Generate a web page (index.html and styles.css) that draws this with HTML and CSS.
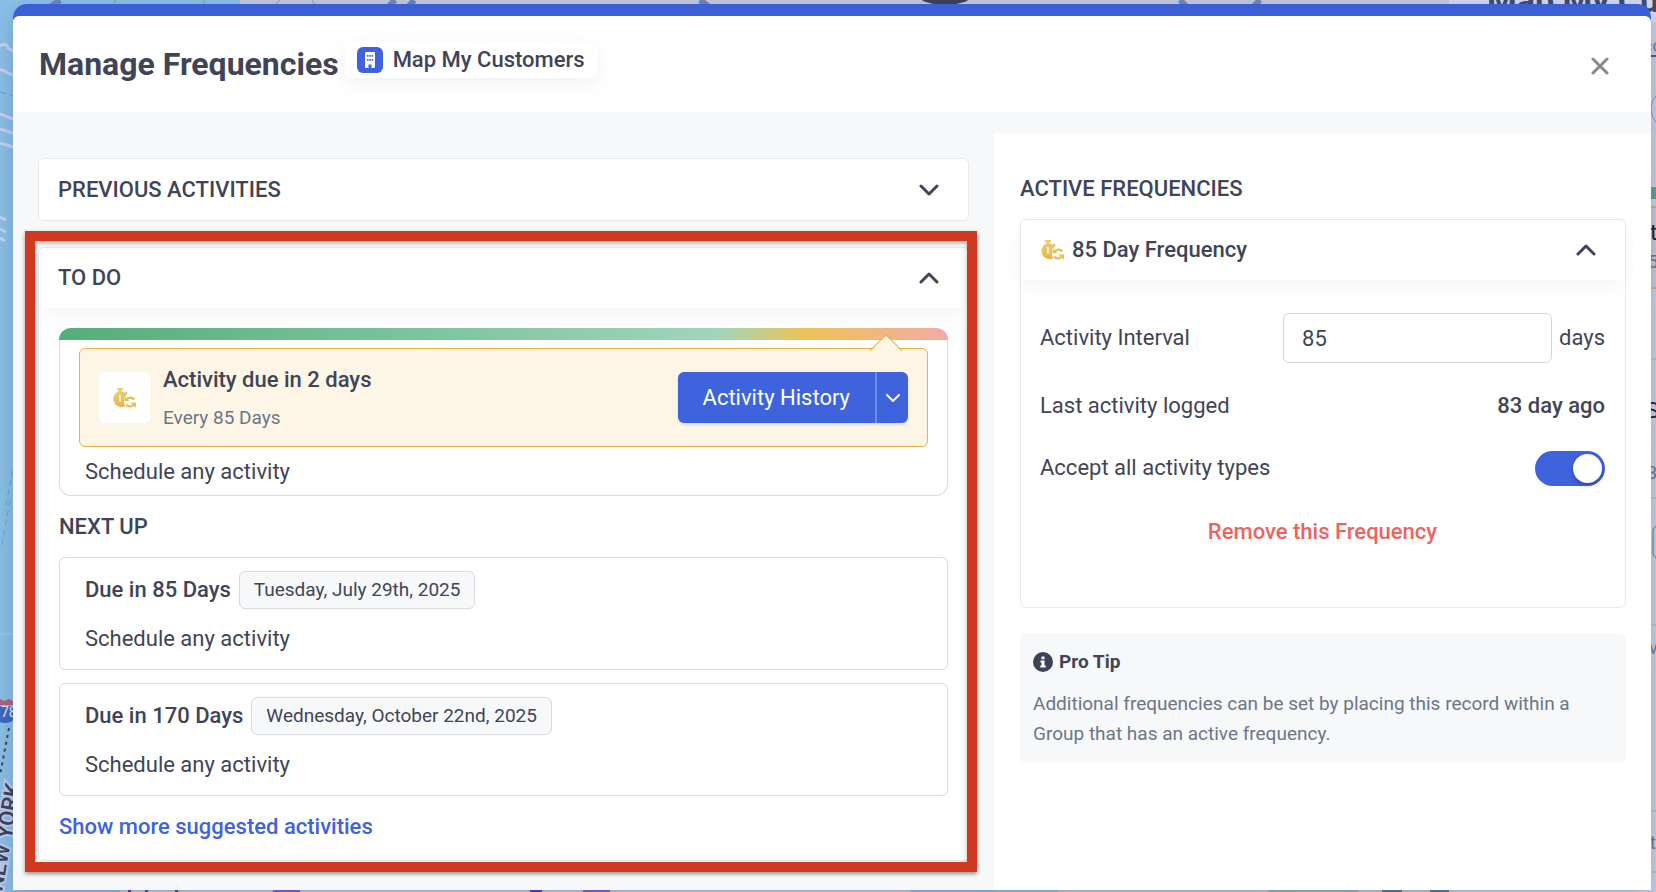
FILE: index.html
```html
<!DOCTYPE html>
<html lang="en">
<head>
    <meta charset="UTF-8">
    <meta name="viewport" content="width=device-width, initial-scale=1.0">
    <title>Manage Frequencies</title>
    <link rel="stylesheet" href="styles.css">
</head>
<body>
    <!-- Map and record panel behind the modal -->
    <svg class="backdrop" viewBox="0 0 1656 892" preserveAspectRatio="none" aria-hidden="true">
        <rect width="1656" height="892" fill="#8cc0e6"/>
        <path d="M240 0h1209v5H240zM120 885h790v7H120zM1058 885h391v7h-391z" fill="#c3c9df"/>
        <path d="M60 0l-8 6M395 0l-6 6M414 0l-5 6M700 0l8 6M1180 0l6 6M1260 0l-6 6" stroke="#6f86b9" stroke-width="6"/>
        <path d="M116 0l-3 5M205 0l-2 5M280 0l-5 5M312 0l3 5" stroke="#5fb7a5" stroke-width="1"/>
        <ellipse cx="945" cy="-4" rx="26" ry="9" fill="#3c4257"/>
        <path d="M0 46q6-4 8 2l5 3M0 69l13 6M0 114l13 5M0 129l13 4M0 143l13 4M0 217l6 3M0 229l6 3M0 238l5 3" stroke="#ccd2ee" stroke-width="3" fill="none"/>
        <path d="M0 92l13 4M13 470L5 510M10 500L2 545" stroke="#5aa9d8" stroke-width="1" fill="none" stroke-dasharray="6 4"/>
        <path d="M0 634h13" stroke="#a5cdec" stroke-width="1"/>
        <path d="M9 728L0 775" stroke="#3c4257" stroke-width="2" stroke-dasharray="3 4"/>
        <path d="M0 699l4 2 5-2 4 2v4H0z" fill="#b4617a"/>
        <path d="M-6 706h22q2 17-11 17T-6 706z" fill="#3f68c0"/>
        <text class="map-road" x="1" y="717">78</text>
        <text class="map-label" transform="translate(2 892) rotate(-80)">NEW YORK</text>
        <path d="M128 891h3M145 891h3M175 891h3M530 891h12" stroke="#5a35c8" stroke-width="3"/>
        <path d="M273 891h27M583 891h27" stroke="#8a5be0" stroke-width="4"/>
        <path d="M1268 891h90" stroke="#8fbdbb" stroke-width="3"/>
        <path d="M1382 891h20M1430 891h19" stroke="#5a77ab" stroke-width="3"/>
        <rect x="1449" width="207" height="892" fill="#c8cfe8"/>
        <rect x="1449" width="207" height="22" fill="#d3daf5"/>
        <text class="panel-title" x="1487" y="12">Map My Customers</text>
        <text class="panel-small" x="1643" y="52">co</text>
        <path d="M1640 56h16" stroke="#4c5a88" stroke-width="2"/>
        <circle cx="1671" cy="109" r="20" fill="none" stroke="#7d90dd"/>
        <rect x="1640" y="187" width="16" height="12" fill="#5ba294"/>
        <rect x="1640" y="207" width="16" height="81" fill="#c6c8d0"/>
        <path d="M1640 207h16M1640 288h16" stroke="#c39a44"/>
        <text class="panel-bold" x="1650" y="240">t</text>
        <text class="panel-small" x="1648" y="268">5</text>
        <path d="M1640 359h16M1640 498h16M1640 625h16M1640 811h16M1640 872h16" stroke="#a7afc9"/>
        <text class="panel-bold" x="1646" y="418">S</text>
        <text class="panel-small" x="1647" y="479">3</text>
        <rect x="1653" y="526" width="20" height="32" rx="5" fill="none" stroke="#3f8191"/>
        <text class="panel-small" x="1649" y="654">v</text>
        <text class="panel-small" x="1650" y="849">t</text>
    </svg>

    <!-- Shared icons -->
    <svg class="sprite" aria-hidden="true">
        <defs>
            <linearGradient id="gold" x1="0" y1="0" x2="0" y2="1">
                <stop offset="0" stop-color="#f0d070"/>
                <stop offset="1" stop-color="#e7b548"/>
            </linearGradient>
        </defs>
        <symbol id="icon-frequency" viewBox="0 0 24 20">
            <path fill="url(#gold)" d="M5 0h6v2H9.500v1.300c1.200.2 2.200.7 3 1.300L14.200 3.500l1.600 1.600-1.300 1.700C12.800 8 12 9.500 12 11.500V14l1 4.500A8 8 0 1 1 6.500 3.300V2H5z"/>
            <path d="M8 7v6.500" stroke="#fff" stroke-width="1.800"/>
            <path d="M14.500 12.200c1.300-3.200 5.500-3.600 7.800-.7M21.800 15.800c-1.300 3.200-5.500 3.600-7.800.7" fill="none" stroke="#eabd55" stroke-width="2.200"/>
            <path d="M12.500 8v5.200h5zM24 20v-5.500h-5.500z" fill="#eabd55"/>
        </symbol>
        <symbol id="icon-down" viewBox="0 0 20 12">
            <path d="M2 2l8 8 8-8" fill="none" stroke="currentColor" stroke-width="3" stroke-linecap="round" stroke-linejoin="round"/>
        </symbol>
        <symbol id="icon-up" viewBox="0 0 20 12">
            <path d="M2 10l8-8 8 8" fill="none" stroke="currentColor" stroke-width="3" stroke-linecap="round" stroke-linejoin="round"/>
        </symbol>
    </svg>

    <main class="modal">
        <header class="modal-header">
            <h1>Manage Frequencies</h1>
            <div class="record">
                <span class="record-icon">
                    <svg width="10" height="16" viewBox="0 0 10 16">
                        <path d="M1 0h8q1 0 1 1v14q0 1-1 1H6.500v-3.500h-3V16H1q-1 0-1-1V1q0-1 1-1z" fill="#fff"/>
                        <path d="M2 3h1.500v1.700H2zM4.300 3h1.500v1.700H4.300zM6.600 3h1.500v1.700H6.600zM2 7h1.500v1.700H2zM4.300 7h1.500v1.700H4.300zM6.600 7h1.500v1.700H6.600z" fill="#3e63dd"/>
                    </svg>
                </span>
                <span>Map My Customers</span>
            </div>
            <button type="button" class="close" aria-label="Close">
                <svg width="18" height="18" viewBox="0 0 18 18"><path d="M2 2l14 14M16 2L2 16" stroke="#888" stroke-width="3" stroke-linecap="round"/></svg>
            </button>
        </header>

        <div class="modal-body">
            <div class="left">
                <section class="card">
                    <button type="button" class="card-header">
                        <span>PREVIOUS ACTIVITIES</span>
                        <svg class="chevron"><use href="#icon-down"/></svg>
                    </button>
                </section>

                <section class="card todo">
                    <button type="button" class="card-header open">
                        <span>TO DO</span>
                        <svg class="chevron"><use href="#icon-up"/></svg>
                    </button>
                    <div class="todo-body">
                        <div class="current">
                            <div class="progress"></div>
                            <div class="alert">
                                <span class="alert-icon"><svg width="24" height="20"><use href="#icon-frequency"/></svg></span>
                                <div class="alert-text">
                                    <strong>Activity due in 2 days</strong>
                                    <small>Every 85 Days</small>
                                </div>
                                <div class="split-button">
                                    <button type="button" class="history">Activity History</button>
                                    <button type="button" class="more" aria-label="More options">
                                        <svg width="14" height="9" viewBox="0 0 14 9"><path d="M1 1l6 6 6-6" fill="none" stroke="#fff" stroke-width="2" stroke-linecap="round" stroke-linejoin="round"/></svg>
                                    </button>
                                </div>
                            </div>
                            <p>Schedule any activity</p>
                        </div>

                        <h2>NEXT UP</h2>
                        <div class="next">
                            <div class="due"><strong>Due in 85 Days</strong><time datetime="2025-07-29">Tuesday, July 29th, 2025</time></div>
                            <p>Schedule any activity</p>
                        </div>
                        <div class="next">
                            <div class="due"><strong>Due in 170 Days</strong><time datetime="2025-10-22">Wednesday, October 22nd, 2025</time></div>
                            <p>Schedule any activity</p>
                        </div>
                        <a href="#" class="show-more">Show more suggested activities</a>
                    </div>
                </section>
            </div>

            <aside class="right">
                <h2>ACTIVE FREQUENCIES</h2>
                <section class="card frequency">
                    <button type="button" class="card-header open">
                        <svg width="24" height="20"><use href="#icon-frequency"/></svg>
                        <span>85 Day Frequency</span>
                        <svg class="chevron"><use href="#icon-up"/></svg>
                    </button>
                    <div class="frequency-body">
                        <div class="row interval">
                            <label for="interval">Activity Interval</label>
                            <input type="text" id="interval" value="85">
                            <span>days</span>
                        </div>
                        <div class="row">
                            <span>Last activity logged</span>
                            <strong>83 day ago</strong>
                        </div>
                        <div class="row">
                            <label for="all-types">Accept all activity types</label>
                            <input type="checkbox" id="all-types" class="toggle" checked>
                        </div>
                        <button type="button" class="remove">Remove this Frequency</button>
                    </div>
                </section>

                <section class="tip">
                    <h3>
                        <svg width="20" height="20" viewBox="0 0 20 20"><circle cx="10" cy="10" r="10" fill="#3c4257"/><path d="M8.500 4.500h3v2.700h-3zM7.500 8.500h4v5h1.300v2H7.300v-2h1.200v-3h-1z" fill="#fff"/></svg>
                        Pro Tip
                    </h3>
                    <p>Additional frequencies can be set by placing this record within a Group that has an active frequency.</p>
                </section>
            </aside>
        </div>
    </main>
</body>
</html>
```
FILE: styles.css
```css
* {
    box-sizing: border-box;
}

body {
    display: flex;
    min-height: 100vh;
    margin: 0;
    padding: 4px 5px 2px 13px;
    font-family: Roboto, "Liberation Sans", sans-serif;
    font-size: 22px;
    line-height: 28px;
    color: #3f4557;
}

h1, h2, h3, p {
    margin: 0;
}

strong {
    font-weight: 500;
}

button {
    padding: 0;
    border: none;
    background: none;
    font: inherit;
    color: inherit;
    cursor: pointer;
}

.backdrop {
    position: absolute;
    inset: 0;
    width: 100%;
    height: 100%;
}

.sprite {
    position: absolute;
    width: 0;
    height: 0;
}

.map-road {
    font-size: 14px;
    fill: #e8ecfa;
}

.map-label {
    font-size: 22px;
    font-weight: 500;
    fill: #3c4257;
    stroke: #c3cdec;
    stroke-width: 4px;
    paint-order: stroke;
}

.panel-title {
    font-size: 34px;
    font-weight: 700;
    fill: #414a70;
}

.panel-bold {
    font-size: 22px;
    fill: #1c2036;
}

.panel-small {
    font-size: 18px;
    fill: #6b7697;
}

.modal {
    position: relative;
    display: flex;
    flex-direction: column;
    flex: 1;
    padding-top: 12px;
    background: linear-gradient(#3b60d6 20px, #f7f8fa 20px);
    border-radius: 14px 14px 0 0;
    box-shadow: 0 8px 24px rgba(30, 50, 100, 0.25);
}

.modal-header {
    display: flex;
    align-items: center;
    gap: 6px;
    height: 96px;
    padding: 0 42px 0 26px;
    background: #fff;
    border-radius: 6px 6px 0 0;
}

h1 {
    font-size: 32px;
    font-weight: 700;
    line-height: 40px;
}

.record {
    display: flex;
    align-items: center;
    gap: 10px;
    height: 36px;
    margin-bottom: 8px;
    padding: 0 12px;
    border-radius: 6px;
    font-weight: 500;
    box-shadow: 0 6px 20px rgba(0, 0, 0, 0.06);
}

.record-icon {
    display: flex;
    align-items: center;
    justify-content: center;
    width: 26px;
    height: 26px;
    border-radius: 6px;
    background: #3e63dd;
}

.close {
    display: flex;
    margin-left: auto;
    padding-top: 4px;
}

.modal-body {
    display: grid;
    grid-template-columns: 981fr 657fr;
    flex: 1;
}

.left {
    padding: 46px 25px 28px;
}

.card {
    position: relative;
    background: #fff;
    border: 1px solid #e8e9ec;
    border-radius: 6px;
}

.card-header {
    display: flex;
    align-items: center;
    gap: 8px;
    width: 100%;
    height: 61px;
    padding: 0 29px 0 19px;
    border-radius: 6px;
    font-weight: 500;
    text-align: left;
}

.card-header.open {
    height: 60px;
    box-shadow: 0 8px 20px rgba(0, 0, 0, 0.04);
}

.chevron {
    width: 20px;
    height: 12px;
    margin-left: auto;
}

.todo {
    margin-top: 26px;
}

/* Red frame that marks the TO DO section */
.todo::after {
    content: "";
    position: absolute;
    inset: -17px -9px -12px -14px;
    border: 10px solid #d23820;
    box-shadow: 0 2px 4px rgba(0, 0, 0, 0.4), inset 0 2px 4px rgba(0, 0, 0, 0.3);
    pointer-events: none;
}

.todo-body {
    padding: 20px 20px 19px;
}

.current {
    position: relative;
    height: 168px;
    border: 1px solid #d9dadd;
    border-top: none;
    border-radius: 12px;
}

.progress {
    height: 12px;
    margin: 0 -1px;
    border-radius: 12px 12px 0 0;
    background: linear-gradient(90deg, #54ae79, #9fd6ba 74%, #edc356 84%, #f4aba8);
}

.alert {
    position: relative;
    display: flex;
    align-items: center;
    gap: 13px;
    height: 99px;
    margin: 8px 19px 0;
    padding: 0 19px;
    background: #fdf6e6;
    border: 1px solid #e8b33f;
    border-radius: 6px;
}

/* Pointer towards the position on the progress bar */
.alert::before {
    content: "";
    position: absolute;
    top: -10px;
    right: 29px;
    width: 22px;
    height: 22px;
    background: linear-gradient(135deg, #fdf6e6 50%, transparent 50%);
    border: 1px solid #e8b33f;
    border-right-color: transparent;
    border-bottom-color: transparent;
    transform: rotate(45deg);
}

.alert-icon {
    display: flex;
    align-items: center;
    justify-content: center;
    width: 51px;
    height: 51px;
    padding-right: 2px;
    border-radius: 6px;
    background: #fff;
}

.alert-text {
    display: flex;
    flex-direction: column;
    gap: 10px;
    padding-top: 2px;
}

.alert-text small {
    font-size: 19px;
    color: #6b7688;
}

.split-button {
    display: flex;
    height: 51px;
    margin-left: auto;
    border-radius: 6px;
    background: #3e63dd;
    color: #fff;
    box-shadow: 0 2px 3px rgba(0, 0, 0, 0.1);
}

.history {
    padding: 0 25px;
}

.more {
    width: 33px;
    padding-bottom: 4px;
    border-left: 2px solid #6f8cec;
}

.current p {
    padding: 11px 25px;
}

h2 {
    font-size: 22px;
    font-weight: 500;
}

.todo-body h2 {
    margin: 17px 0 16px;
}

.next {
    height: 113px;
    margin-bottom: 13px;
    padding: 13px 25px;
    border: 1px solid #d9dadd;
    border-radius: 6px;
}

.due {
    display: flex;
    align-items: center;
    gap: 8px;
    margin-bottom: 16px;
}

.due time {
    padding: 4px 14px;
    border: 1px solid #d9dadd;
    border-radius: 6px;
    background: #f7f8fa;
    font-size: 19px;
}

.show-more {
    display: block;
    margin-top: 17px;
    font-weight: 500;
    color: #3e63dd;
    text-decoration: none;
}

.right {
    margin-top: 21px;
    padding: 42px 25px 24px 26px;
    background: #fff;
}

.right h2 {
    margin-bottom: 16px;
}

.frequency {
    min-height: 389px;
}

.frequency-body {
    padding: 33px 20px 0 19px;
}

.row {
    display: flex;
    align-items: center;
    justify-content: space-between;
    height: 36px;
    margin-bottom: 26px;
}

.row.interval {
    gap: 7px;
    height: 50px;
    margin-bottom: 25px;
}

.interval label {
    flex: 1;
}

.interval input {
    width: 269px;
    height: 50px;
    padding: 0 18px;
    border: 1px solid #d5d7db;
    border-radius: 6px;
    font: inherit;
    color: inherit;
}

.toggle {
    appearance: none;
    display: flex;
    justify-content: flex-end;
    width: 70px;
    height: 35px;
    margin: 0;
    padding: 3px;
    border-radius: 18px;
    background: #3e63dd;
}

.toggle::before {
    content: "";
    width: 29px;
    height: 29px;
    border-radius: 50%;
    background: #fff;
    box-shadow: 0 2px 4px rgba(0, 0, 0, 0.3);
}

.toggle:not(:checked) {
    justify-content: flex-start;
    background: #c5c9d3;
}

.remove {
    display: block;
    margin: 32px auto 0;
    font-weight: 500;
    color: #f0625d;
}

.tip {
    margin-top: 26px;
    padding: 14px 13px;
    border-radius: 6px;
    background: #f7f8fa;
    font-size: 19px;
    line-height: 30px;
    color: #6b7688;
}

.tip h3 {
    display: flex;
    align-items: center;
    gap: 6px;
    height: 28px;
    margin-bottom: 13px;
    font-size: 19px;
    font-weight: 700;
    color: #3f4557;
}
```
